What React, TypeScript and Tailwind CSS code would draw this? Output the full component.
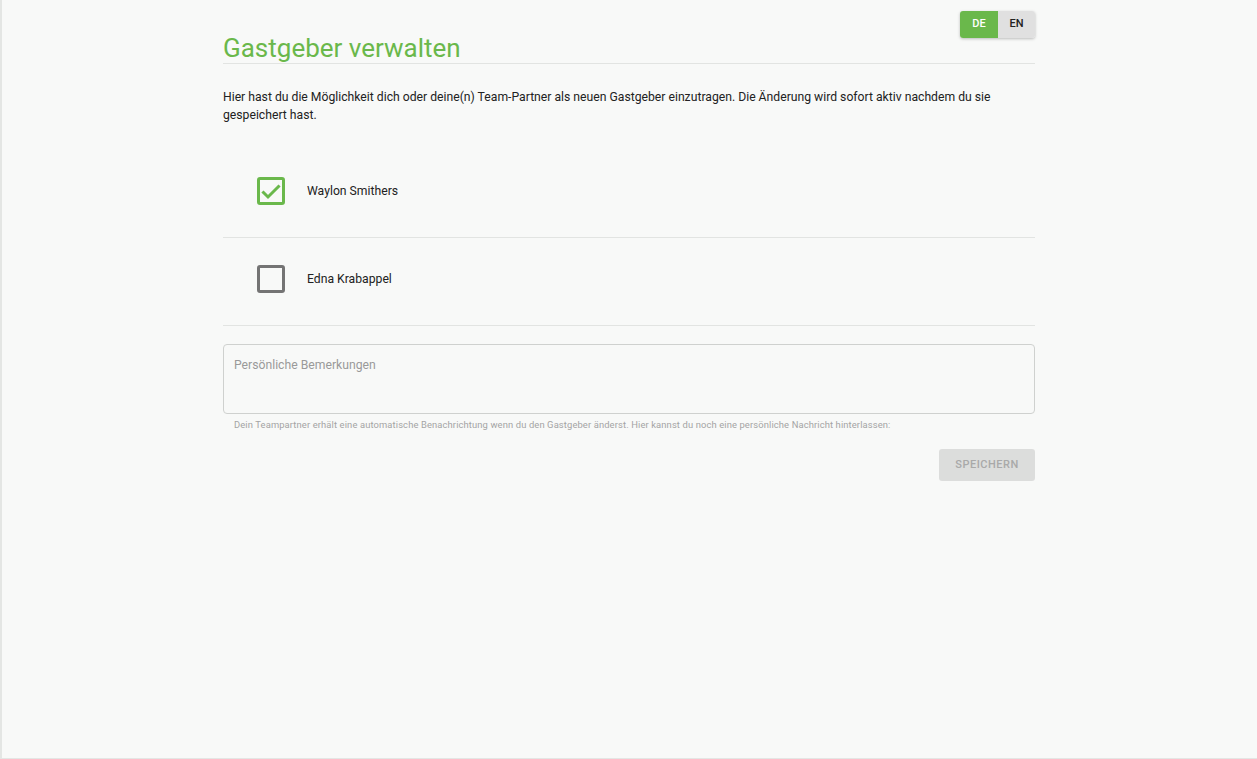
import { useState } from 'react'

const people = [
    { name: 'Waylon Smithers', checked: true },
    { name: 'Edna Krabappel', checked: false },
]

function Box({ checked }: { checked: boolean }) {
    if (checked) {
        return (
            <div className="w-[28px] h-[28px] rounded-[3px] border-[3px] border-[#6ab84b] flex items-center justify-center">
                <svg width="22" height="22" viewBox="0 0 22 22" fill="none" stroke="#6ab84b" strokeWidth="3" strokeLinecap="square">
                    <path d="M3.5 12.5l4.5 4.5L18.5 6.5" />
                </svg>
            </div>
        )
    }
    return <div className="w-[28px] h-[28px] rounded-[3px] border-[3px] border-[#747474]" />
}

export default function App() {
    const [lang, setLang] = useState('DE')
    const [rows, setRows] = useState(people)

    return (
        <div className="min-h-[759px] bg-[#f8f9f8] border-l-2 border-b border-[#e4e6e4] font-['Roboto',sans-serif] text-[#222]">
            <div className="w-[812px] ml-[221px] pt-[11px]">
                {/* header */}
                <div className="flex justify-end">
                    <div className="flex rounded-[3px] shadow-[0_1px_3px_rgba(0,0,0,0.25)] overflow-hidden text-[11px] font-medium">
                        {['DE', 'EN'].map(l => (
                            <button
                                key={l}
                                onClick={() => setLang(l)}
                                className={l === lang
                                    ? 'w-[38px] h-[27px] bg-[#6ab84b] text-white'
                                    : 'w-[37px] h-[27px] bg-[#e0e0e0] text-[#222]'}
                            >
                                {l}
                            </button>
                        ))}
                    </div>
                </div>
                <h1 className="-mt-[5px] text-[26px] leading-[30px] text-[#6ab84b] border-b border-[#e2e4e2]">Gastgeber verwalten</h1>

                <p className="mt-[24px] text-[12.2px] leading-[18px]">
                    Hier hast du die Möglichkeit dich oder deine(n) Team-Partner als neuen Gastgeber einzutragen. Die Änderung wird sofort aktiv nachdem du sie gespeichert hast.
                </p>

                {/* people */}
                <div className="mt-[26px]">
                    {rows.map((p, i) => (
                        <div
                            key={p.name}
                            onClick={() => setRows(rows.map((r, j) => j === i ? { ...r, checked: !r.checked } : r))}
                            className={`flex items-end pb-[32px] border-b border-[#e2e4e2] cursor-pointer ${i === 0 ? '-mt-[6px] h-[94px]' : 'h-[88px]'}`}
                        >
                            <div className="flex items-center">
                                <div className="ml-[34px] mr-[22px]"><Box checked={p.checked} /></div>
                                <span className="text-[12.2px]">{p.name}</span>
                            </div>
                        </div>
                    ))}
                </div>

                <textarea
                    placeholder="Persönliche Bemerkungen"
                    className="mt-[18px] block w-full h-[70px] resize-none rounded-[4px] border border-[#cfd1cf] bg-transparent px-[10px] py-[11px] text-[12.2px] placeholder:text-[#9a9a9a] outline-none"
                />
                <p className="mt-[4px] pl-[11px] text-[9.4px] text-[#a4a4a4] tracking-[0.12px]">
                    Dein Teampartner erhält eine automatische Benachrichtung wenn du den Gastgeber änderst. Hier kannst du noch eine persönliche Nachricht hinterlassen:
                </p>

                <div className="flex justify-end mt-[17px]">
                    <button disabled className="w-[96px] h-[32px] rounded-[3px] bg-[#dcdddc] text-[#a9a9a9] text-[11px] font-medium tracking-[0.5px]">
                        SPEICHERN
                    </button>
                </div>
            </div>
        </div>
    )
}
